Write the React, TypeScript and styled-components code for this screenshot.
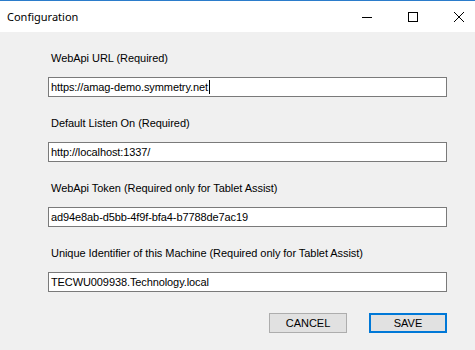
import React from "react";
import styled, { createGlobalStyle } from "styled-components";

const GlobalStyle = createGlobalStyle`
  html, body {
    margin: 0;
    padding: 0;
    overflow: hidden;
    background: #f0f0f0;
  }
`;

const Window = styled.div`
  width: 482px;
  height: 350px;
  display: flex;
  flex-direction: column;
  background: #f0f0f0;
  border-top: 1px solid #2b7ccb;
  box-sizing: border-box;
  font-family: "Liberation Sans", Arial, sans-serif;
`;

const TitleBar = styled.div`
  height: 31px;
  display: flex;
  align-items: center;
  background: #ffffff;
`;

const Title = styled.div`
  flex: 1;
  padding-left: 7px;
  font-family: "Noto Sans", "Open Sans", sans-serif;
  font-size: 11px;
  color: #000;
`;

const CaptionButton = styled.div`
  width: 46px;
  height: 31px;
  display: flex;
  align-items: center;
  justify-content: center;
`;

const Body = styled.div`
  flex: 1;
  display: flex;
  flex-direction: column;
  padding: 20px 35px 0 48px;
`;

const Fields = styled.div`
  display: flex;
  flex-direction: column;
  gap: 20px;
`;

const Field = styled.div`
  display: flex;
  flex-direction: column;
`;

const Label = styled.div`
  height: 13px;
  line-height: 13px;
  font-size: 11px;
  letter-spacing: -0.05px;
  color: #000;
  padding-left: 3px;
  margin-bottom: 12px;
`;

const TextBox = styled.div`
  height: 20px;
  box-sizing: border-box;
  border: 1px solid #7a7a7a;
  background: #fff;
  display: flex;
  align-items: center;
  padding-left: 2px;
  font-size: 11px;
  letter-spacing: -0.1px;
  color: #000;
  white-space: nowrap;
`;

const Caret = styled.span`
  display: inline-block;
  width: 1px;
  height: 14px;
  background: #000;
  margin-left: 1px;
`;

const ButtonRow = styled.div`
  display: flex;
  justify-content: flex-end;
  gap: 22px;
  margin-top: 21px;
`;

const Button = styled.div<{ $primary?: boolean }>`
  width: 78px;
  height: 20px;
  box-sizing: border-box;
  display: flex;
  align-items: center;
  justify-content: center;
  background: #e1e1e1;
  border: ${(p) => (p.$primary ? "2px solid #0078d7" : "1px solid #adadad")};
  font-size: 11px;
  color: #000;
`;

const fields = [
  { label: "WebApi URL (Required)", value: "https://amag-demo.symmetry.net", focused: true },
  { label: "Default Listen On (Required)", value: "http://localhost:1337/" },
  { label: "WebApi Token (Required only for Tablet Assist)", value: "ad94e8ab-d5bb-4f9f-bfa4-b7788de7ac19" },
  {
    label: "Unique Identifier of this Machine (Required only for Tablet Assist)",
    value: "TECWU009938.Technology.local",
  },
];

const App = () => {
  return (
    <>
      <GlobalStyle />
      <Window>
        <TitleBar>
          <Title>Configuration</Title>
          <CaptionButton>
            <svg width="10" height="10" viewBox="0 0 10 10">
              <line x1="0" y1="5.5" x2="10" y2="5.5" stroke="#000" strokeWidth="1" />
            </svg>
          </CaptionButton>
          <CaptionButton>
            <svg width="10" height="10" viewBox="0 0 10 10">
              <rect x="0.5" y="0.5" width="9" height="9" fill="none" stroke="#000" strokeWidth="1" />
            </svg>
          </CaptionButton>
          <CaptionButton>
            <svg width="10" height="10" viewBox="0 0 10 10">
              <path d="M0 0 L10 10 M10 0 L0 10" stroke="#000" strokeWidth="1" />
            </svg>
          </CaptionButton>
        </TitleBar>
        <Body>
          <Fields>
            {fields.map((f) => (
              <Field key={f.label}>
                <Label>{f.label}</Label>
                <TextBox>
                  {f.value}
                  {f.focused && <Caret />}
                </TextBox>
              </Field>
            ))}
          </Fields>
          <ButtonRow>
            <Button>CANCEL</Button>
            <Button $primary>SAVE</Button>
          </ButtonRow>
        </Body>
      </Window>
    </>
  );
};

export default App;
